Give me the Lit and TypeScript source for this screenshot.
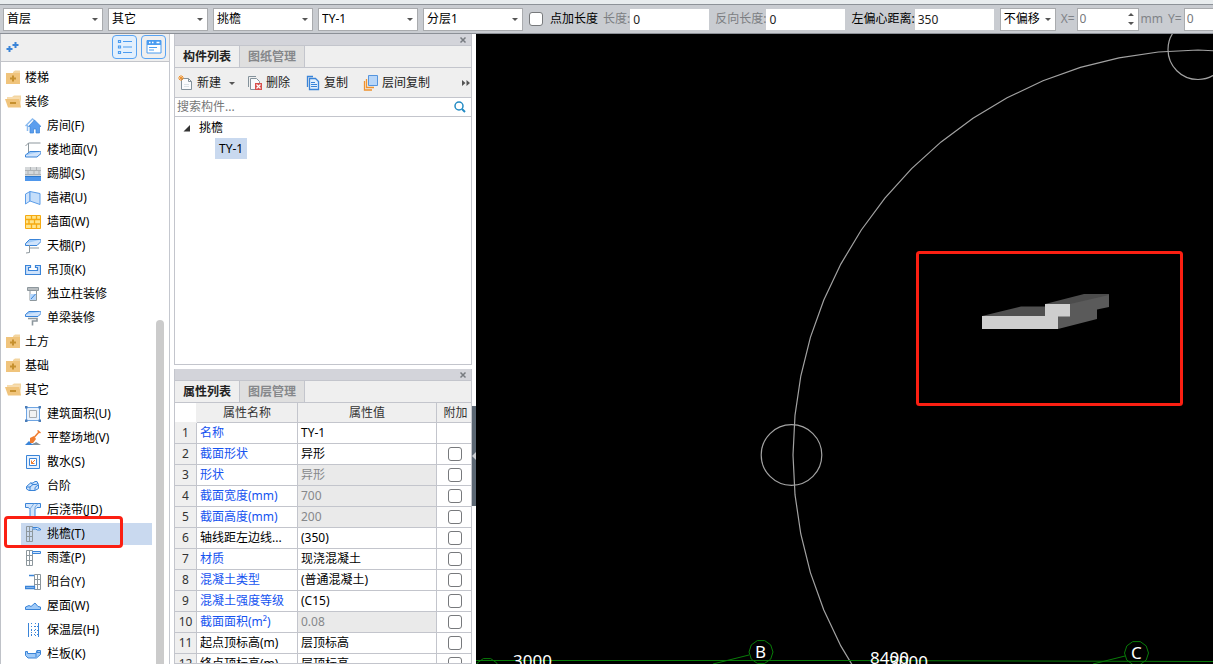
import { LitElement, html, svg, css, nothing } from "lit";
import { customElement, property, state } from "lit/decorators.js";
import { classMap } from "lit/directives/class-map.js";

const S = "#3a84d8";
const L = "#cfe3fb";
const G = "#8d979d";
const beamWall = svg`<g fill="none" stroke="${G}"><path d="M1.5.5h6v15h-6zM1.5 5.5h3M1.5 10.5h6M4.5.5v15M4.5 5.5h3"/></g>`;

const icons: Record<string, unknown> = {
  closed: svg`<path d="M8 2l2-1.500h5V3H8z" fill="#f3d5a0"/><path d="M1 3h14v11H1z" fill="#f0c47c"/><path d="M8 5.500v6M5 8.500h6" stroke="#c6902f" stroke-width="2"/>`,
  open: svg`<path d="M7 3l2-1.500h7V11l-1-6H7z" fill="#f3d5a0"/><path d="M2 3h13v2.500H2z" fill="#f7dcae"/><path d="M0 5h14.500l1.500 8.500H3z" fill="#f0c47c"/><path d="M5 9h6" stroke="#c6902f" stroke-width="2"/>`,
  house: svg`<path d="M.5 8L7.500 1l2 1.500M2.500 7v6" fill="none" stroke="#8dbcf0" stroke-width="1.500"/><path d="M9.500 2L16 8.500h-1.500V15h-3.500v-4H8.500v4H5V8.500H3.500z" fill="#5b9eee" stroke="${S}" stroke-width=".7"/>`,
  floor: svg`<path d="M3.500 11V1M3.500 1h12M3.500 1L.5 4" fill="none" stroke="${G}"/><path d="M5 9.500h11L12 13H.5z" fill="#9fcaf8" stroke="${S}"/><path d="M.5 13v2H12l4-3.500v-2" fill="${L}" stroke="${S}"/>`,
  skirting: svg`<path d="M0 1h16v9H0z" fill="#d5d8da"/><path d="M0 4.500h16M0 8.500h16M5.500 1v3.500M11.500 1v3.500M3 4.500v4M9 4.500v4M14 4.500v4" stroke="#aeb2b5"/><path d="M0 10h16v5H0z" fill="#4f97ec"/><path d="M0 10.500h16" stroke="#2e78ca"/>`,
  dado: svg`<path d="M.5 4L5 1.500v9.500L.5 14z" fill="${L}" stroke="#5c9de8"/><path d="M5 1.500l10 2v11L5 11z" fill="#c5defa" stroke="#5c9de8"/>`,
  wall: svg`<path d="M.5 1.500h15v13H.5z" fill="#ffe58c" stroke="#f5aa12"/><path d="M.5 5.500h15M.5 10h15M6.500 1.500v4M11.500 1.500v4M4 5.500V10M9.500 5.500V10M6.500 10v4.500M11.500 10v4.500" stroke="#f5aa12" stroke-width="1.300"/>`,
  ceiling: svg`<path d="M4.500 1.500H16L12 5.500H.5z" fill="#9fcaf8" stroke="${S}"/><path d="M.5 5.500v2H12l4-4v-2" fill="${L}" stroke="${S}"/><path d="M4.500 7v7.500L1 15M4.500 10H14" fill="none" stroke="${G}"/>`,
  drop: svg`<path d="M.5 3.500h5v2h-2v3h9v-3h-2v-2h5v9H.5z" fill="${L}" stroke="${S}" stroke-width="1.200"/>`,
  column: svg`<path d="M2.500 1.500h11v3h-11z" fill="#b8bdc0" stroke="${G}"/><path d="M5 4.500h6.500v10H5z" fill="#fff" stroke="${G}"/><path d="M5 8h6v6H5z" fill="#b6d6fa"/><path d="M6 13l4.500-5" stroke="${S}"/>`,
  beam: svg`<path d="M4 1.500h12L13 4.500H.5z" fill="#9fcaf8" stroke="${S}"/><path d="M.5 4.500v2H13l3-3v-2" fill="${L}" stroke="${S}"/><path d="M3 8.500h9v2.500H7.500v4.500" fill="none" stroke="${G}" stroke-width="1.600"/>`,
  area: svg`<path d="M1.500 1.500h13v13h-13z" fill="#e9f2fd" stroke="#6fa5e2"/><path d="M4.500 4.500h7v7h-7z" fill="#f2f2f2" stroke="#a8acb0"/><path d="M0 0h2.500v2.500H0zM13.500 0H16v2.500h-2.500zM0 13.500h2.500V16H0zM13.500 13.500H16V16h-2.500z" fill="#4b7db8"/>`,
  ground: svg`<path d="M0 15l4-4 3 3 3-1 3 2z" fill="${S}"/><path d="M7 15l4-3 5 3z" fill="#85929b"/><path d="M5 8l4-2 2 3-3 4H5z" fill="#f07c2e"/><path d="M9.500 7l4.500-5M12.500.5l3 2.500" stroke="#f07c2e" stroke-width="1.500"/>`,
  apron: svg`<path d="M1.500 1.500h13v13h-13z" fill="#e9f2fd" stroke="${S}"/><path d="M4.500 4.500h7v7h-7z" fill="#fff" stroke="${S}"/><path d="M10 6L6.500 9.500M6.500 6.500v3h3" fill="none" stroke="#ef7d31"/>`,
  steps: svg`<path d="M1.500 8.500L5.500 5H8l2-1.500h2l1.500 3v4l-3.500 2H4l-2.500-1.500z" fill="${L}" stroke="${S}"/><path d="M1.500 9H5l3-2.500h3l2-1M5 9v3M5.500 5L8 6.500M10 12V9.500l3-2.500" fill="none" stroke="${S}"/>`,
  strip: svg`<path d="M.5 1.500h15v4H12l-2 2v7H5v-7L3.500 5.500h-3z" fill="${L}" stroke="${S}"/><path d="M5 7l4-5.500M10 7.500V5l3-3.500" fill="none" stroke="#79a9dd"/>`,
  eave: svg`${beamWall}<path d="M7.500 1.500h5l3 1.500v1h-3l-2-1h-3" fill="${L}" stroke="${S}"/>`,
  canopy: svg`${beamWall}<path d="M7.500 1.500h8v2h-8z" fill="${L}" stroke="${S}"/>`,
  balcony: svg`<g transform="translate(8)">${beamWall}</g><path d="M4 1.500h5M.5 12.500h9v2h-9z" fill="${L}" stroke="${S}" stroke-width="1.300"/>`,
  roof: svg`<path d="M.5 11.500V9L4 7.500l2 1L10 5l3 3.500 2.500.5v2.500z" fill="#9fcaf8" stroke="${S}"/>`,
  insulation: svg`<path d="M3.500 1v14M13.500 1v14" stroke="${S}"/><path d="M6.500 1v14M10.500 1v14" stroke="${S}" stroke-dasharray="1 2"/><path d="M3 4.500h11M3 8.500h11M3 12.500h11" stroke="${S}" stroke-dasharray="1 2"/>`,
  board: svg`<path d="M.5 5.500h2v2h8.500l1-3h3.500v4l-4 3.500H3L.5 9.500z" fill="#9fcaf8" stroke="${S}"/><path d="M11 7.500V11M12 4.500v2h3.500" fill="none" stroke="${S}"/>`,
  create: svg`<path d="M3.500 3.500h7l3 3v8h-10z" fill="#fafbfc" stroke="#84929b"/><path d="M10.500 3.500v3h3" fill="none" stroke="#84929b"/><path d="M6 9.500h5M6 11.500h5" stroke="#dbe2e6"/><path d="M1 1l4 4M5 1L1 5M3 0v6M0 3h6" stroke="#ef922f"/>`,
  remove: svg`<path d="M1.500 12V1.500H9" fill="none" stroke="#84929b"/><path d="M3.500 3.500h6l3 3v8h-9z" fill="#f8fafb" stroke="#84929b"/><path d="M8 8h7v7H8z" fill="#d8504d"/><path d="M9.500 9.500l4 4M13.500 9.500l-4 4" stroke="#fff" stroke-width="1.200"/>`,
  copy: svg`<path d="M2.500 12V1.500H8" fill="none" stroke="${S}" stroke-width="1.300"/><path d="M4.500 3.500h6l3 3v8h-9z" fill="#e4f0fd" stroke="${S}" stroke-width="1.300"/><path d="M6 7.500h4M6 9.500h6M6 11.500h6" stroke="${S}"/>`,
  layers: svg`<path d="M1.500 6v9H9M3.500 4v8.500H11" fill="none" stroke="#ef922f" stroke-width="1.300"/><path d="M5.500.5h9v10h-9z" fill="#b8d6f8" stroke="#5595de"/>`,
  search: svg`<circle cx="7" cy="7" r="4" fill="none" stroke="#238bc4" stroke-width="1.500"/><path d="M10 10l3 3" stroke="#238bc4" stroke-width="2"/>`,
  list: svg`<path d="M1.500 1.500h2v2h-2zM1.500 7h2v2h-2zM1.500 12.500h2v2h-2zM6 2.500h9M6 8h9M6 13.500h9" fill="none" stroke="#4b9cf0" stroke-width="1.200"/>`,
  card: svg`<path d="M1 1.500h14v12.500H1z" fill="#fff" stroke="#4b9cf0"/><path d="M1 1.500h14V6H1z" fill="#4b9cf0"/><path d="M3 8.500h8M3 11h5" stroke="#4b9cf0"/><path d="M3 3.500h1.500M6 3.500h1.500M10.500 3.500h3" stroke="#fff" stroke-width="1.500"/>`,
  plus: svg`<path d="M4.500 7v6M1.500 10h6M10.500 3v6M7.500 6h6" stroke="${S}" stroke-width="2"/>`,
  close: svg`<path d="M5.500 5.500l5 5M10.500 5.500l-5 5" stroke="#777b80" stroke-width="1.500"/>`,
  more: svg`<path d="M4 5l3.500 3L4 11zM8.500 5L12 8l-3.500 3z" fill="#555"/>`,
  down: svg`<path d="M5 7h6l-3 3z" fill="#555"/>`,
  expanded: svg`<path d="M11 5v6.500H4.500z" fill="#333"/>`,
};

const icon = (name: string) =>
  html`<svg class="icon" width="16" height="16" viewBox="0 0 16 16" aria-hidden="true">${icons[name]}</svg>`;

const base = css`
  * { box-sizing: border-box; }
  button, input, select { font: inherit; color: inherit; margin: 0; padding: 0; border: 0; border-radius: 0; background: none; outline: 0; }
  button { display: flex; align-items: center; white-space: nowrap; }
  input[type="checkbox"] { appearance: none; display: block; flex: none; width: 14px; height: 14px; border: 1px solid #77797c; border-radius: 3px; background: #fff; }
  .icon { display: block; flex: none; }
`;

@customElement("option-bar")
class OptionBar extends LitElement {
  static styles = [base, css`
    :host { display: flex; align-items: center; flex: none; height: 30px; padding-left: 3px; background: #c9ccd1; border-top: 1px solid #8d9298; border-bottom: 1px solid #8c9097; overflow: hidden; white-space: nowrap; }
    .pick { display: grid; flex: none; width: 100px; height: 23px; margin-right: 5px; background: #fff; border: 1px solid #a9abae; align-items: center; }
    .pick > * { grid-area: 1 / 1; }
    .pick select { appearance: none; width: 100%; height: 21px; padding-left: 3px; color: #000; }
    .pick .icon { justify-self: end; margin-right: -1px; pointer-events: none; }
    .small { width: 56px; }
    .check { display: flex; align-items: center; gap: 7px; margin: 0 5px 0 1px; color: #000; }
    .field { display: flex; align-items: center; flex: none; margin-right: 6px; }
    .field input { width: 79px; height: 21px; padding-left: 3px; background: #fff; color: #222; }
    .muted { color: #7c7e82; }
    .strong { color: #000; }
    .axis { display: flex; align-items: center; flex: none; gap: 2px; margin-right: 5px; color: #808388; }
    .spin { display: flex; align-items: center; width: 62px; height: 23px; background: #fff; border: 1px solid #a9abae; }
    .spin input { flex: 1; min-width: 0; padding-left: 2px; color: #77797c; }
  `];

  private pick(label: string, value: string, small = false) {
    return html`<span class=${classMap({ pick: true, small })}>
      <select aria-label=${label}><option>${value}</option></select>${icon("down")}
    </span>`;
  }

  private field(label: string, value: string, tone: string) {
    return html`<label class="field ${tone}">${label}<input type="text" .value=${value}></label>`;
  }

  private axis(label: string, unit: string) {
    return html`<label class="axis">${label}
      <span class="spin"><input type="text" value="0">
        <svg class="icon" width="14" height="16" viewBox="0 0 14 16" aria-hidden="true"><path d="M4 5L7 2l3 3zM4 11h6l-3 3z" fill="#555"/></svg>
      </span>${unit}</label>`;
  }

  render() {
    return html`
      ${this.pick("楼层", "首层")}${this.pick("类别", "其它")}${this.pick("构件类型", "挑檐")}
      ${this.pick("构件", "TY-1")}${this.pick("分层", "分层1")}
      <label class="check"><input type="checkbox">点加长度</label>
      ${this.field("长度:", "0", "muted")}${this.field("反向长度:", "0", "muted")}${this.field("左偏心距离:", "350", "strong")}
      ${this.pick("偏移方式", "不偏移", true)}${this.axis("X=", "mm")}${this.axis("Y=", "mm")}`;
  }
}

interface Leaf { icon: string; label: string; }
interface Group { label: string; children?: Leaf[]; }

const groups: Group[] = [
  { label: "楼梯" },
  { label: "装修", children: [
    { icon: "house", label: "房间(F)" }, { icon: "floor", label: "楼地面(V)" }, { icon: "skirting", label: "踢脚(S)" },
    { icon: "dado", label: "墙裙(U)" }, { icon: "wall", label: "墙面(W)" }, { icon: "ceiling", label: "天棚(P)" },
    { icon: "drop", label: "吊顶(K)" }, { icon: "column", label: "独立柱装修" }, { icon: "beam", label: "单梁装修" },
  ] },
  { label: "土方" },
  { label: "基础" },
  { label: "其它", children: [
    { icon: "area", label: "建筑面积(U)" }, { icon: "ground", label: "平整场地(V)" }, { icon: "apron", label: "散水(S)" },
    { icon: "steps", label: "台阶" }, { icon: "strip", label: "后浇带(JD)" }, { icon: "eave", label: "挑檐(T)" },
    { icon: "canopy", label: "雨蓬(P)" }, { icon: "balcony", label: "阳台(Y)" }, { icon: "roof", label: "屋面(W)" },
    { icon: "insulation", label: "保温层(H)" }, { icon: "board", label: "栏板(K)" },
  ] },
];

@customElement("module-tree")
class ModuleTree extends LitElement {
  @state() private selected = "挑檐(T)";

  static styles = [base, css`
    :host { display: flex; flex-direction: column; width: 170px; flex: none; min-height: 0; background: #fff; border-left: 1px solid #bfc2c8; border-right: 1px solid #c5c8cf; color: #000; }
    .head { display: flex; flex: none; align-items: center; gap: 4px; height: 28px; padding: 0 3px 2px 4px; background: #efefef; border-bottom: 1px solid #c3c5ca; }
    .add { margin-right: auto; }
    .view { width: 25px; height: 24px; justify-content: center; border: 1px solid #58a3f2; border-radius: 4px; }
    .on { background: #e3f0fd; }
    .body { display: flex; flex: 1; min-height: 0; overflow: hidden; }
    ul { list-style: none; margin: 0; padding: 0; }
    .groups { width: 151px; padding-top: 4px; }
    .group { height: 24px; padding-left: 4px; gap: 4px; }
    .leaf { width: 131px; height: 22px; margin: 1px 0 1px 20px; padding-left: 4px; gap: 6px; }
    li { display: flow-root; position: relative; }
    .selected { background: #c9d9ef; }
    .mark { position: absolute; left: 3px; top: -6px; width: 119px; height: 32px; border: 3px solid #fb1f12; border-radius: 4px; pointer-events: none; }
    .rail { display: flex; width: 16px; justify-content: center; padding-top: 258px; }
    .thumb { width: 8px; border-radius: 4px 4px 0 0; background: #cbcbcb; }
  `];

  render() {
    return html`
      <div class="head">
        <button class="add" aria-label="添加">${icon("plus")}</button>
        <button class="view on" aria-label="列表">${icon("list")}</button>
        <button class="view" aria-label="卡片">${icon("card")}</button>
      </div>
      <div class="body">
        <ul class="groups">
          ${groups.map((g) => html`<li>
            <button class="group">${icon(g.children ? "open" : "closed")}${g.label}</button>
            ${g.children ? html`<ul>${g.children.map((c) => html`<li>
              <button class=${classMap({ leaf: true, selected: c.label === this.selected })} @click=${() => (this.selected = c.label)}>${icon(c.icon)}${c.label}</button>
              ${c.icon === "eave" ? html`<span class="mark"></span>` : nothing}
            </li>`)}</ul>` : nothing}
          </li>`)}
        </ul>
        <div class="rail"><div class="thumb"></div></div>
      </div>`;
  }
}

@customElement("dock-panel")
class DockPanel extends LitElement {
  @property({ attribute: false }) tabs: string[] = [];

  static styles = [base, css`
    :host { display: flex; flex-direction: column; min-height: 0; background: #fff; border: 1px solid #c3c5cc; border-top: 0; overflow: hidden; }
    .bar { display: flex; flex: none; justify-content: flex-end; align-items: center; height: 12px; background: #d3d4da; border-bottom: 1px solid #c3c5cc; }
    .tabs { display: flex; flex: none; height: 22px; background: #efefef; border-bottom: 1px solid #c3c5cc; }
    .tab { width: 65px; justify-content: center; font-weight: 700; color: #222; border-right: 1px solid #c3c5cc; }
    .idle { background: #dfdfdf; color: #86888b; }
  `];

  render() {
    return html`
      <div class="bar"><button aria-label="关闭">${icon("close")}</button></div>
      <div class="tabs" role="tablist">
        ${this.tabs.map((t, i) => html`<button role="tab" class=${classMap({ tab: true, idle: i > 0 })}>${t}</button>`)}
      </div>
      <slot></slot>`;
  }
}

@customElement("component-list")
class ComponentList extends LitElement {
  static styles = [base, css`
    :host { display: flex; flex-direction: column; }
    .tools { display: flex; align-items: center; height: 30px; padding-left: 3px; background: #efefef; border-bottom: 1px solid #c3c5cc; color: #222; }
    .tool { gap: 3px; margin-right: 15px; }
    .first { margin-right: 7px; }
    .more { margin-left: auto; margin-right: -3px; }
    .search { display: flex; align-items: center; height: 19px; padding: 0 3px 0 2px; border-bottom: 1px solid #c3c5cc; }
    .search input { flex: 1; min-width: 0; }
    .search input::placeholder { color: #777; opacity: 1; }
    .node { gap: 4px; height: 21px; padding-left: 4px; color: #000; }
    .item { align-self: flex-start; height: 21px; margin-left: 40px; padding: 0 4px; background: #c9d9ef; color: #000; }
  `];

  render() {
    return html`
      <div class="tools">
        <button class="tool first">${icon("create")}新建${icon("down")}</button>
        <button class="tool">${icon("remove")}删除</button>
        <button class="tool">${icon("copy")}复制</button>
        <button class="tool">${icon("layers")}层间复制</button>
        <button class="more" aria-label="更多">${icon("more")}</button>
      </div>
      <label class="search"><input type="text" placeholder="搜索构件..." aria-label="搜索构件">${icon("search")}</label>
      <button class="node">${icon("expanded")}挑檐</button>
      <button class="item">TY-1</button>`;
  }
}

interface Prop { name: string; value: string; blue?: boolean; locked?: boolean; }

const props: Prop[] = [
  { name: "名称", value: "TY-1", blue: true },
  { name: "截面形状", value: "异形", blue: true },
  { name: "形状", value: "异形", blue: true, locked: true },
  { name: "截面宽度(mm)", value: "700", blue: true, locked: true },
  { name: "截面高度(mm)", value: "200", blue: true, locked: true },
  { name: "轴线距左边线...", value: "(350)" },
  { name: "材质", value: "现浇混凝土", blue: true },
  { name: "混凝土类型", value: "(普通混凝土)", blue: true },
  { name: "混凝土强度等级", value: "(C15)", blue: true },
  { name: "截面面积(m²)", value: "0.08", blue: true, locked: true },
  { name: "起点顶标高(m)", value: "层顶标高" },
  { name: "终点顶标高(m)", value: "层顶标高" },
];

@customElement("property-table")
class PropertyTable extends LitElement {
  static styles = [base, css`
    :host { display: block; }
    table { width: 100%; table-layout: fixed; border-collapse: separate; border-spacing: 0; color: #000; }
    th, td { height: 21px; padding: 0 0 0 3px; border-right: 1px solid #c3c5cc; border-bottom: 1px solid #c3c5cc; font-weight: 400; text-align: left; white-space: nowrap; overflow: hidden; line-height: 16px; }
    tr > :last-child { border-right: 0; }
    thead th { height: 20px; padding: 0; background: #efefef; text-align: center; color: #333; }
    thead .corner { background: #fff; border-color: #efefef; }
    .no { width: 22px; padding: 0; background: #efefef; text-align: center; color: #333; }
    .name { width: 101px; }
    .extra { width: 34px; }
    thead .extra { padding-left: 3px; }
    .blue { color: #1553f0; }
    .locked { background: #eaeaea; color: #86888b; }
    input[type="checkbox"] { margin-left: 8px; }
  `];

  render() {
    return html`<table>
      <thead><tr><th class="no corner"></th><th class="name">属性名称</th><th>属性值</th><th class="extra">附加</th></tr></thead>
      <tbody>${props.map((p, i) => html`<tr>
        <th class="no" scope="row">${i + 1}</th>
        <td class=${classMap({ blue: !!p.blue })}>${p.name}</td>
        <td class=${classMap({ locked: !!p.locked })}>${p.value}</td>
        <td>${i ? html`<input type="checkbox" aria-label=${"附加 " + p.name}>` : nothing}</td>
      </tr>`)}</tbody>
    </table>`;
  }
}

const SEGMENTS = 64;
const axisRing = (cx: number, cy: number, r: number, n: number) =>
  Array.from({ length: n }, (_, i) => {
    const a = (i / n) * Math.PI * 2;
    return `${(cx + r * Math.cos(a)).toFixed(1)},${(cy + r * Math.sin(a)).toFixed(1)}`;
  }).join(" ");

@customElement("model-view")
class ModelView extends LitElement {
  static styles = css`
    :host { display: block; flex: 1; min-width: 0; background: #000; overflow: hidden; }
    svg { display: block; width: 100%; height: 100%; }
    text { fill: #fff; font-size: 17px; }
  `;

  render() {
    return html`<svg role="img" aria-label="三维视图">
      <g fill="none" stroke="#a2a2a2" stroke-width="1.200">
        <polygon points=${axisRing(722, 421, 405, SEGMENTS)} />
        <circle cx="315.500" cy="421" r="30.300" />
        <circle cx="722" cy="15.500" r="30" />
      </g>
      <g fill="none" stroke="#087c08">
        <polygon points=${axisRing(285, 618, 12, 10)} />
        <polygon points=${axisRing(660.5, 619, 12, 10)} />
        <polygon points=${axisRing(11, 636, 12, 10)} />
        <path d="M0 626.500H360L737 627.500M273 621L237 630M649 622L617 630" />
      </g>
      <path d="M506 282l39-9.500h25V282z" fill="#505050" />
      <path d="M569 270l39-10h25v2l-39 9z" fill="#4c4c4c" />
      <path d="M594 270l39-9v12l-12 2.500V285l-39 10v-13h12z" fill="#5a5a5a" />
      <path d="M506 282h63v-12h25v12.500h-12V295h-76z" fill="#cecece" />
      <text x="279" y="624">B</text>
      <text x="655" y="625">C</text>
      <text x="37" y="633">3000</text>
      <text x="394" y="630">8400</text>
      <text x="413" y="634">3000</text>
      <rect x="441.500" y="218.500" width="264" height="152" rx="2" fill="none" stroke="#fb1f12" stroke-width="3" />
    </svg>`;
  }
}

@customElement("app-root")
class AppRoot extends LitElement {
  static styles = [base, css`
    :host { display: flex; flex-direction: column; height: 100vh; overflow: hidden; background: #fff; font: 12px/16px "Noto Sans", "Noto Sans CJK SC", sans-serif; }
    .ribbon { flex: none; height: 4px; background: #e8ecee; }
    .work { display: flex; flex: 1; min-height: 0; }
    .docks { display: grid; grid-template-rows: 331px 1fr; gap: 4px; width: 298px; flex: none; margin-left: 4px; min-height: 0; }
    .split { display: flex; flex: none; width: 4px; padding-top: 372px; }
    .grip { width: 4px; height: 100px; background: #5b6773; justify-content: center; }
  `];

  render() {
    return html`
      <div class="ribbon"></div>
      <option-bar></option-bar>
      <div class="work">
        <module-tree></module-tree>
        <div class="docks">
          <dock-panel .tabs=${["构件列表", "图纸管理"]}><component-list></component-list></dock-panel>
          <dock-panel .tabs=${["属性列表", "图层管理"]}><property-table></property-table></dock-panel>
        </div>
        <div class="split"><button class="grip" aria-label="折叠">
          <svg class="icon" width="4" height="8" viewBox="0 0 4 8" aria-hidden="true"><path d="M4 0v8L0 4z" fill="#c9ccd1"/></svg>
        </button></div>
        <model-view></model-view>
      </div>`;
  }
}
